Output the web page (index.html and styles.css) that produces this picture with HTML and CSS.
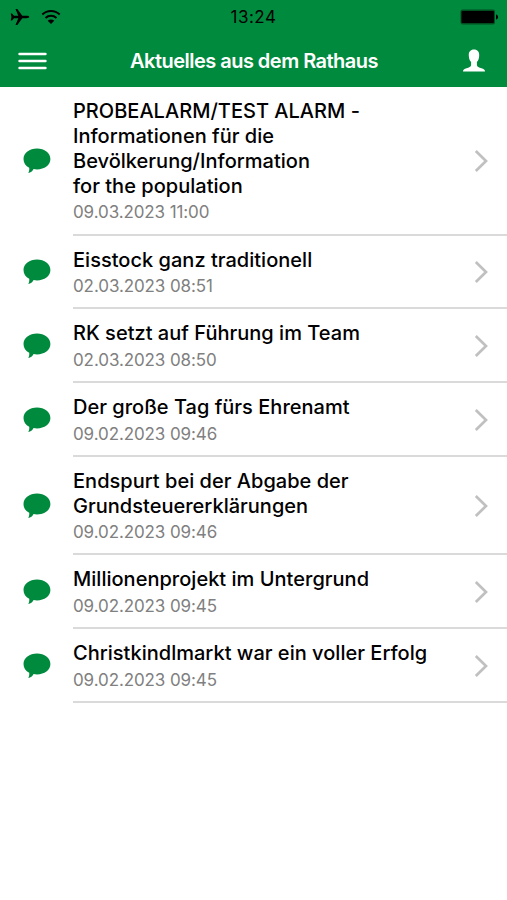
FILE: index.html
```html
<!DOCTYPE html>
<html lang="de">
<head>
    <meta charset="UTF-8">
    <meta name="viewport" content="width=device-width, initial-scale=1.0">
    <title>Aktuelles aus dem Rathaus</title>
    <link rel="stylesheet" href="styles.css">
</head>
<body>
    <svg class="sprites">
        <symbol id="bubble" viewBox="0 0 28 26">
            <path d="M14 .5C21.500.5 27.400 5 27.400 11C27.400 17 21.500 21.400 14 21.400C12.800 21.400 11.700 21.300 10.600 21.100C9.500 23 7.600 24.900 5.300 25C6.100 23.500 6.500 21.500 6.200 19.800C2.700 18 .5 15 .5 11C.5 5 6.500.5 14 .5Z"/>
        </symbol>
        <symbol id="chevron" viewBox="0 0 14 24">
            <path d="M1.800 2L12 12L1.800 22" fill="none" stroke="#c0c0c0" stroke-width="2.700"/>
        </symbol>
    </svg>

    <header class="header">
        <div class="status-bar">
            <div class="status-icons">
                <svg class="plane" width="20" height="18" viewBox="0 0 20 18">
                    <path d="M19.300 9C19.300 9.700 18 10.200 16.500 10.200H12.300L7.300 17H5.500L8.300 10.200H4L2 12.500H.7L1.500 9L.7 5.500H2L4 7.800H8.300L5.500 1H7.300L12.300 7.800H16.500C18 7.800 19.300 8.300 19.300 9Z"/>
                </svg>
                <svg class="wifi" width="20" height="16" viewBox="0 0 20 16">
                    <path d="M1.300 5.500C6.200.8 13.800.8 18.700 5.500M4.500 9C7.600 6.100 12.400 6.100 15.500 9" fill="none" stroke="#000" stroke-width="2"/>
                    <path d="M10 15L6.700 11.700C8.500 10 11.500 10 13.300 11.700Z"/>
                </svg>
            </div>
            <span class="time">13:24</span>
            <svg class="battery" width="39" height="16" viewBox="0 0 39 16">
                <rect x=".5" y=".5" width="34.500" height="15" rx="2" fill="#004d20"/>
                <rect x="1.500" y="2" width="32.500" height="12" rx="1"/>
                <path d="M36 5.500C38.800 6 38.800 10 36 10.500Z"/>
            </svg>
        </div>
        <div class="nav-bar">
            <svg class="menu" width="30" height="20" viewBox="0 0 30 20">
                <path d="M1.500 3H27.500M1.500 10H27.500M1.500 17H27.500" stroke="#fff" stroke-width="2.400" stroke-linecap="round"/>
            </svg>
            <h1>Aktuelles aus dem Rathaus</h1>
            <svg class="user" width="24" height="24" viewBox="0 0 24 24">
                <path d="M12 .5C15.500.5 17.500 3 17.200 6.500C17.100 9.300 16.500 11.500 14.900 13V16C15 18 17 18.500 19.500 19.300C21.700 20 23 20.700 23 22.500H1C1 20.700 2.300 20 4.500 19.300C7 18.500 9 18 9.100 16V13C7.500 11.500 6.900 9.300 6.800 6.500C6.500 3 8.500.5 12 .5Z" fill="#fff"/>
            </svg>
        </div>
    </header>

    <main class="list">
        <div class="item">
            <svg class="bubble"><use href="#bubble"/></svg>
            <div class="content">
                <div class="text">
                    <h2>PROBEALARM/TEST ALARM -<br>Informationen für die<br>Bevölkerung/Information<br>for the population</h2>
                    <p>09.03.2023 11:00</p>
                </div>
                <svg class="chevron"><use href="#chevron"/></svg>
            </div>
        </div>
        <div class="item">
            <svg class="bubble"><use href="#bubble"/></svg>
            <div class="content">
                <div class="text">
                    <h2>Eisstock ganz traditionell</h2>
                    <p>02.03.2023 08:51</p>
                </div>
                <svg class="chevron"><use href="#chevron"/></svg>
            </div>
        </div>
        <div class="item">
            <svg class="bubble"><use href="#bubble"/></svg>
            <div class="content">
                <div class="text">
                    <h2>RK setzt auf Führung im Team</h2>
                    <p>02.03.2023 08:50</p>
                </div>
                <svg class="chevron"><use href="#chevron"/></svg>
            </div>
        </div>
        <div class="item">
            <svg class="bubble"><use href="#bubble"/></svg>
            <div class="content">
                <div class="text">
                    <h2>Der große Tag fürs Ehrenamt</h2>
                    <p>09.02.2023 09:46</p>
                </div>
                <svg class="chevron"><use href="#chevron"/></svg>
            </div>
        </div>
        <div class="item">
            <svg class="bubble"><use href="#bubble"/></svg>
            <div class="content">
                <div class="text">
                    <h2>Endspurt bei der Abgabe der<br>Grundsteuererklärungen</h2>
                    <p>09.02.2023 09:46</p>
                </div>
                <svg class="chevron"><use href="#chevron"/></svg>
            </div>
        </div>
        <div class="item">
            <svg class="bubble"><use href="#bubble"/></svg>
            <div class="content">
                <div class="text">
                    <h2>Millionenprojekt im Untergrund</h2>
                    <p>09.02.2023 09:45</p>
                </div>
                <svg class="chevron"><use href="#chevron"/></svg>
            </div>
        </div>
        <div class="item">
            <svg class="bubble"><use href="#bubble"/></svg>
            <div class="content">
                <div class="text">
                    <h2>Christkindlmarkt war ein voller Erfolg</h2>
                    <p>09.02.2023 09:45</p>
                </div>
                <svg class="chevron"><use href="#chevron"/></svg>
            </div>
        </div>
    </main>
</body>
</html>
```

FILE: styles.css
```css
body {
    margin: 0;
    height: 900px;
    overflow: hidden;
    background: #fff;
    color: #000;
    font-family: Inter, "Liberation Sans", sans-serif;
}
.sprites {
    display: none;
}
.header {
    height: 87px;
    background: #008a3e;
}
.status-bar {
    display: grid;
    grid-template-columns: 1fr auto 1fr;
    align-items: center;
    height: 34px;
    padding: 0 10px 0 10px;
}
.status-icons {
    display: flex;
    align-items: center;
    gap: 11px;
}
.time {
    font-size: 17px;
    letter-spacing: 0.5px;
}
.battery {
    justify-self: end;
    margin-right: -2px;
}
.nav-bar {
    display: flex;
    align-items: center;
    justify-content: space-between;
    height: 54px;
    padding: 0 21px 0 18px;
}
h1 {
    margin: 0 2px 0 0;
    color: #fff;
    font-size: 20px;
    font-weight: 600;
    letter-spacing: -0.52px;
}
.list {
    padding-top: 0.400px;
}
.item {
    display: flex;
    align-items: center;
    padding-left: 23px;
}
.bubble {
    width: 28px;
    height: 26px;
    margin-right: 22px;
    fill: #008a3e;
}
.content {
    flex: 1;
    display: flex;
    align-items: center;
    justify-content: space-between;
    padding: 12px 19.500px 10.200px 0;
    border-bottom: 2px solid #dadada;
}
h2 {
    margin: 0;
    font-size: 20px;
    font-weight: 500;
    line-height: 24.800px;
    letter-spacing: 0.02px;
}
.text p {
    margin: 2.750px 0 0;
    color: #808080;
    font-size: 17px;
    line-height: 22px;
    letter-spacing: -0.1px;
}
.chevron {
    width: 14px;
    height: 24px;
}
```
